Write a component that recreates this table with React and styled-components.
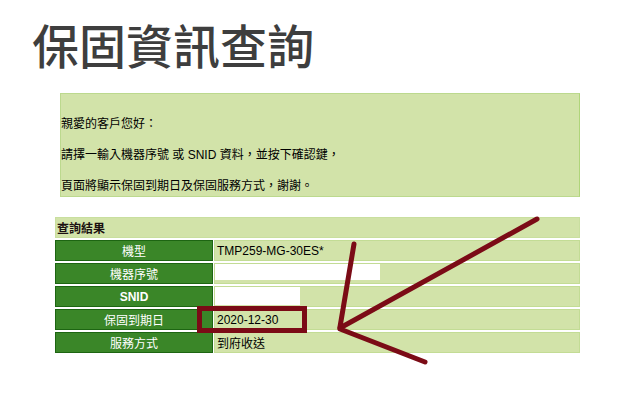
import React from 'react';
import styled, { createGlobalStyle } from 'styled-components';

const GlobalStyle = createGlobalStyle`
  html, body {
    margin: 0;
    padding: 0;
    background: #fff;
  }
  body {
    font-family: "Liberation Sans", "Noto Sans CJK TC", sans-serif;
  }
`;

// Styled Components
const Page = styled.div`
  position: relative;
  width: 617px;
  height: 416px;
  overflow: hidden;
`;

const Title = styled.h1`
  margin: 0;
  padding: 16px 0 0 32px;
  font-family: "Noto Sans CJK TC", sans-serif;
  font-size: 47px;
  line-height: 56px;
  font-weight: 500;
  color: #3e3e3e;
`;

const Notice = styled.div`
  margin: 21px 0 0 60px;
  width: 520px;
  box-sizing: border-box;
  padding: 22px 0 2px 0;
  background: #d2e3a9;
  border: 1px solid #bcd98e;
  border-right-color: #b0d57a;
`;

const NoticeLine = styled.p`
  margin: 0 0 15px;
  font-size: 12px;
  line-height: 16px;
  color: #000;

  &:last-child {
    margin-bottom: 0;
  }
`;

const ResultTable = styled.table`
  margin: 18px 0 0 54px;
  width: 527px;
  border-collapse: separate;
  border-spacing: 1px 2px;
  font-size: 12px;
`;

const HeadCell = styled.th`
  height: 21px;
  box-sizing: border-box;
  padding: 0 1px;
  text-align: left;
  font-weight: bold;
  color: #1a1010;
  background: #d2e3a9;
  border: 1px solid #c9df9f;
`;

const Label = styled.td`
  width: 158px;
  height: 21px;
  box-sizing: border-box;
  padding: 0;
  text-align: center;
  vertical-align: middle;
  color: #fff;
  font-weight: ${p => (p.$bold ? 'bold' : 'normal')};
  background: #3a8628;
  border: 1px solid #1d6512;
`;

const Value = styled.td`
  height: 21px;
  box-sizing: border-box;
  padding: 0 2px;
  vertical-align: ${p => (p.$top ? 'top' : 'middle')};
  color: #000;
  background: #d2e3a9;
  border: 1px solid #c3dc95;
`;

const Blank = styled.span`
  display: block;
  margin-left: -2px;
  width: ${p => p.$w}px;
  height: ${p => p.$h}px;
  background: #fff;
`;

const Highlight = styled.div`
  position: absolute;
  left: 197px;
  top: 306px;
  width: 110px;
  height: 27px;
  box-sizing: border-box;
  border: 5px solid #7b0b16;
`;

const Arrow = styled.svg`
  position: absolute;
  left: 0;
  top: 0;
  pointer-events: none;
`;

const rows = [
  { label: '機型', value: 'TMP259-MG-30ES*' },
  { label: '機器序號', blank: { w: 165, h: 16 } },
  { label: 'SNID', bold: true, blank: { w: 85, h: 18 } },
  { label: '保固到期日', value: '2020-12-30' },
  { label: '服務方式', value: '到府收送' },
];

// Component
const App = () => {
  return (
    <Page>
      <GlobalStyle />
      <Title>保固資訊查詢</Title>
      <Notice>
        <NoticeLine>親愛的客戶您好：</NoticeLine>
        <NoticeLine>請擇一輸入機器序號 或 SNID 資料，並按下確認鍵，</NoticeLine>
        <NoticeLine>頁面將顯示保固到期日及保固服務方式，謝謝。</NoticeLine>
      </Notice>
      <ResultTable>
        <thead>
          <tr>
            <HeadCell colSpan={2}>查詢結果</HeadCell>
          </tr>
        </thead>
        <tbody>
          {rows.map((row) => (
            <tr key={row.label}>
              <Label $bold={row.bold}>{row.label}</Label>
              {row.blank ? (
                <Value $top>
                  <Blank $w={row.blank.w} $h={row.blank.h} />
                </Value>
              ) : (
                <Value>{row.value}</Value>
              )}
            </tr>
          ))}
        </tbody>
      </ResultTable>
      <Highlight />
      <Arrow width="617" height="416" viewBox="0 0 617 416">
        <g stroke="#7b0b16" strokeWidth="5" strokeLinecap="round" strokeLinejoin="round" fill="none">
          <path d="M537 219 L340 328" />
          <path d="M354 244 L340 327" />
          <path d="M340 329 L425 362" />
        </g>
      </Arrow>
    </Page>
  );
};

export default App;
